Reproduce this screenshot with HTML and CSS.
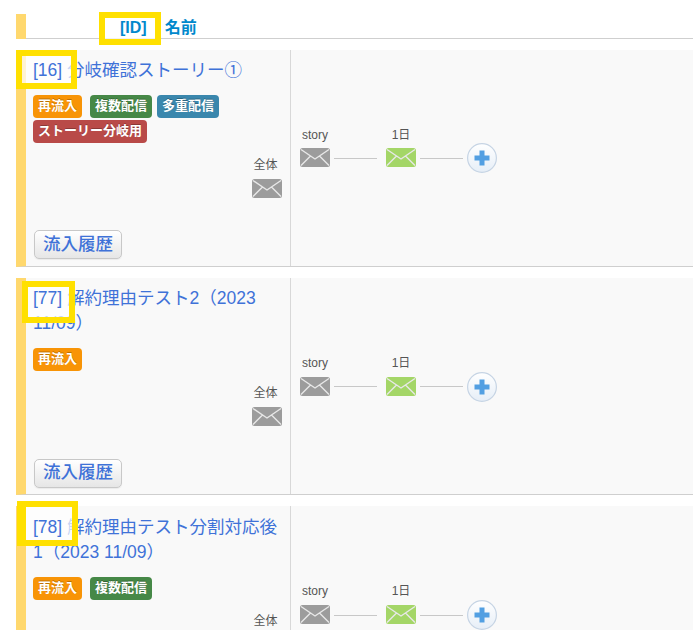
FILE: index.html
```html
<!DOCTYPE html>
<html lang="ja">
<head>
    <meta charset="UTF-8">
    <title>シナリオ一覧</title>
    <link rel="stylesheet" href="styles.css">
</head>
<body>

    <svg class="sprites" width="0" height="0">
        <defs>
            <linearGradient id="add-bg" x1="0" y1="0" x2="0" y2="1">
                <stop offset="0" stop-color="#ffffff"/>
                <stop offset="1" stop-color="#e6eef7"/>
            </linearGradient>
        </defs>
        <symbol id="mail" viewBox="0 0 30 19">
            <rect x="0" y="0" width="30" height="19" rx="2.5" fill="currentColor"/>
            <path d="M1 1.5 L15 11 L29 1.5 M1 17.5 L10.5 8 M29 17.5 L19.5 8" fill="none" stroke="#e8e8e8" stroke-width="1.4"/>
        </symbol>
        <symbol id="plus" viewBox="0 0 30 30">
            <circle cx="15" cy="15" r="14.4" fill="url(#add-bg)" stroke="#c6d4e4" stroke-width="1.2"/>
            <path d="M15 7.5 V22.5 M7.5 15 H22.5" fill="none" stroke="#529fe2" stroke-width="5"/>
        </symbol>
    </svg>

    <div class="list">
        <div class="head">
            <span class="head--id">[ID]</span>
            <span class="head--name">名前</span>
            <div class="mark mark-head"></div>
        </div>

        <div class="row">
            <div class="row--info">
                <div class="row--summary">
                    <a class="row--title"><span class="row--id">[16]</span> 分岐確認ストーリー①</a>
                    <div class="labels">
                        <span class="label orange">再流入</span>
                        <span class="label green">複数配信</span>
                        <span class="label blue">多重配信</span>
                        <span class="label red">ストーリー分岐用</span>
                    </div>
                </div>
                <div class="total">
                    <span class="total--text">全体</span>
                    <svg class="mail gray"><use href="#mail"/></svg>
                </div>
                <button class="history">流入履歴</button>
            </div>
            <div class="flow">
                <span class="flow--label">story</span><span></span>
                <span class="flow--label">1日</span><span></span><span></span>
                <svg class="mail gray"><use href="#mail"/></svg><i class="flow--line"></i>
                <svg class="mail lime"><use href="#mail"/></svg><i class="flow--line"></i>
                <svg class="add"><use href="#plus"/></svg>
            </div>
            <div class="mark mark-16"></div>
        </div>

        <div class="row">
            <div class="row--info">
                <div class="row--summary">
                    <a class="row--title"><span class="row--id">[77]</span> 解約理由テスト2（2023 11/09）</a>
                    <div class="labels">
                        <span class="label orange">再流入</span>
                    </div>
                </div>
                <div class="total">
                    <span class="total--text">全体</span>
                    <svg class="mail gray"><use href="#mail"/></svg>
                </div>
                <button class="history">流入履歴</button>
            </div>
            <div class="flow">
                <span class="flow--label">story</span><span></span>
                <span class="flow--label">1日</span><span></span><span></span>
                <svg class="mail gray"><use href="#mail"/></svg><i class="flow--line"></i>
                <svg class="mail lime"><use href="#mail"/></svg><i class="flow--line"></i>
                <svg class="add"><use href="#plus"/></svg>
            </div>
            <div class="mark mark-77"></div>
        </div>

        <div class="row">
            <div class="row--info">
                <div class="row--summary">
                    <a class="row--title"><span class="row--id">[78]</span> 解約理由テスト分割対応後1（2023 11/09）</a>
                    <div class="labels">
                        <span class="label orange">再流入</span>
                        <span class="label green">複数配信</span>
                    </div>
                </div>
                <div class="total">
                    <span class="total--text">全体</span>
                    <svg class="mail gray"><use href="#mail"/></svg>
                </div>
                <button class="history">流入履歴</button>
            </div>
            <div class="flow">
                <span class="flow--label">story</span><span></span>
                <span class="flow--label">1日</span><span></span><span></span>
                <svg class="mail gray"><use href="#mail"/></svg><i class="flow--line"></i>
                <svg class="mail lime"><use href="#mail"/></svg><i class="flow--line"></i>
                <svg class="add"><use href="#plus"/></svg>
            </div>
            <div class="mark mark-78"></div>
        </div>
    </div>

</body>
</html>
```

FILE: styles.css
```css
html, body {
    height: 100%;
    overflow: hidden;
}
body {
    font-family: 'Liberation Sans', 'Noto Sans CJK JP', sans-serif;
    background-color: #ffffff;
    color: #555555;
    margin: 0;
}

.sprites {
    position: absolute;
}

.list {
    padding: 14px 0 0 16px;
}

/* header */
.head {
    position: relative;
    height: 22px;
    margin-bottom: 11px;
    border-left: 10px solid #ffd86e;
    display: flex;
    align-items: center;
    gap: 18px;
    padding: 3px 0 0 94px;
    box-shadow: inset 0 -1px 0 #cfcfcf;
    font-size: 16px;
    font-weight: 700;
    color: #0088cc;
    line-height: 1;
}
.head--id {
    position: relative;
    z-index: 2;
}

/* rows */
.row {
    position: relative;
    display: flex;
    height: 216px;
    margin-bottom: 11.2px;
    border-left: 10px solid #ffd86e;
    border-bottom: 1px solid #cfcfcf;
    background-color: #f9f9f9;
}
.row--info {
    width: 264px;
    border-right: 1px solid #d8d8d8;
    display: grid;
    grid-template: 1fr / 1fr;
}
.row--summary, .total, .history {
    grid-area: 1 / 1;
}
.row--summary {
    padding: 8.2px 7px 0 7px;
}
.row--title {
    font-size: 17.5px;
    line-height: 25px;
    color: #3f72d8;
    display: block;
}
.row--id {
    position: relative;
    z-index: 2;
}

.labels {
    margin-top: 12px;
    display: flex;
    flex-wrap: wrap;
    gap: 2px 5px;
}
.label {
    height: 23px;
    line-height: 22px;
    padding: 0 5px;
    border-radius: 4px;
    font-size: 13px;
    font-weight: 700;
    color: #ffffff;
    text-shadow: 0 -1px 0 rgba(0, 0, 0, .25);
}
.orange { background-color: #f89406; margin-right: 3px; }
.green { background-color: #468847; }
.blue { background-color: #3a87ad; }
.red { background-color: #b94a48; }

.total {
    justify-self: end;
    margin: 107px 8px 0 0;
    display: flex;
    flex-direction: column;
    align-items: center;
    gap: 5px;
    font-size: 12px;
    line-height: 17px;
}
.total--text {
    padding-right: 3px;
}

.history {
    justify-self: start;
    align-self: end;
    margin: 0 0 6.6px 8px;
    width: 88px;
    height: 29px;
    padding: 0;
    font-family: inherit;
    font-size: 17.5px;
    font-weight: 500;
    line-height: 1;
    color: #3f72d8;
    background: linear-gradient(#ffffff, #e6e6e6);
    border: 1px solid #c8c8c8;
    border-radius: 5px;
    box-shadow: 0 1px 1px rgba(0, 0, 0, .06);
}

/* delivery flow */
.flow {
    flex: 1;
    display: grid;
    grid-template-columns: 30px 48px 30px 43px 30px;
    grid-template-rows: 15.4px 30px;
    column-gap: 4px;
    align-content: start;
    align-items: start;
    padding: 78px 0 0 9px;
    font-size: 12px;
    line-height: 14px;
}
.flow--label {
    justify-self: center;
    white-space: nowrap;
}
.flow--line {
    width: 43px;
    height: 1px;
    margin-top: 14.8px;
    background-color: #c8c8c8;
}

.mail {
    width: 30px;
    height: 19px;
    display: block;
}
.flow .mail {
    margin-top: 5px;
}
.gray { color: #9c9c9c; }
.lime { color: #a4d667; }
.add {
    width: 30px;
    height: 30px;
    display: block;
}

/* yellow annotation boxes */
.mark {
    position: absolute;
    box-sizing: border-box;
    border: 6px solid #ffe000;
    background-color: rgba(255, 255, 255, .7);
}
.mark-head {
    left: 73px;
    top: -2px;
    width: 62px;
    height: 33px;
}
.mark-16 {
    left: -10px;
    top: 0;
    width: 61px;
    height: 39px;
}
.mark-77 {
    left: -4px;
    top: 3px;
    width: 53px;
    height: 42px;
}
.mark-78 {
    left: -9px;
    top: -5px;
    width: 61px;
    height: 45px;
    border-left-width: 9px;
}
```
